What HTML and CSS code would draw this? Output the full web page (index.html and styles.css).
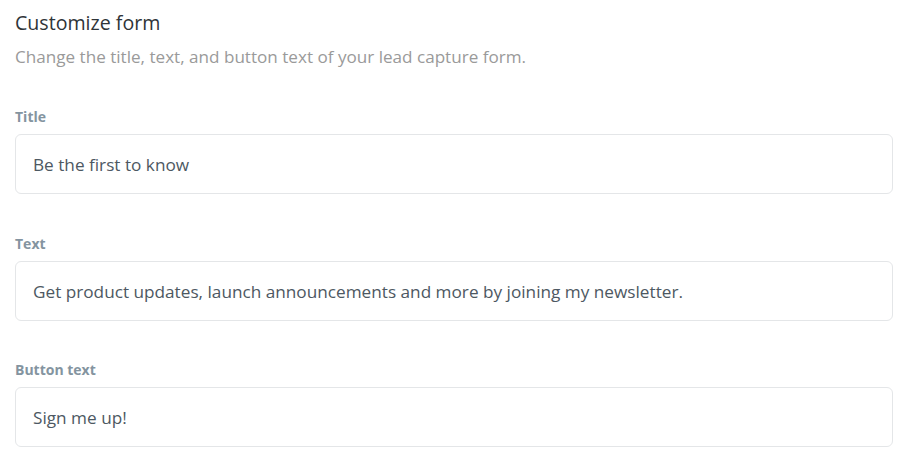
FILE: index.html
```html
<!DOCTYPE html>
<html>
<head>
<meta charset="utf-8">
<link rel="stylesheet" href="styles.css">
</head>
<body>
<div class="panel">
  <h1 class="heading">Customize form</h1>
  <p class="sub">Change the title, text, and button text of your lead capture form.</p>
  <div class="field">
    <label class="label">Title</label>
    <div class="input">Be the first to know</div>
  </div>
  <div class="field">
    <label class="label">Text</label>
    <div class="input">Get product updates, launch announcements and more by joining my newsletter.</div>
  </div>
  <div class="field">
    <label class="label">Button text</label>
    <div class="input">Sign me up!</div>
  </div>
</div>
</body>
</html>
```
FILE: styles.css
```css
html, body { margin: 0; padding: 0; background: #fff; }
body { font-family: "Open Sans", "Noto Sans", sans-serif; }
.panel { width: 878px; padding: 11px 0 0 15px; }
.heading { margin: 0; font-size: 19.6px; font-weight: 400; color: #2f3438; line-height: 24px; }
.sub { margin: 11px 0 0; font-size: 17.1px; color: #9a9a9a; line-height: 22px; }
.field { margin-top: 40px; }
.field + .field { margin-top: 41px; }
.field:last-child { margin-top: 40px; }
.label { display: block; font-size: 14px; font-weight: 700; color: #8494a0; line-height: 18px; }
.input { margin-top: 8px; border: 1px solid #e4e6e8; border-radius: 6px; box-sizing: border-box; height: 60px; padding: 0 17px; display: flex; align-items: center; font-size: 17.2px; color: #4d5862; }
```
